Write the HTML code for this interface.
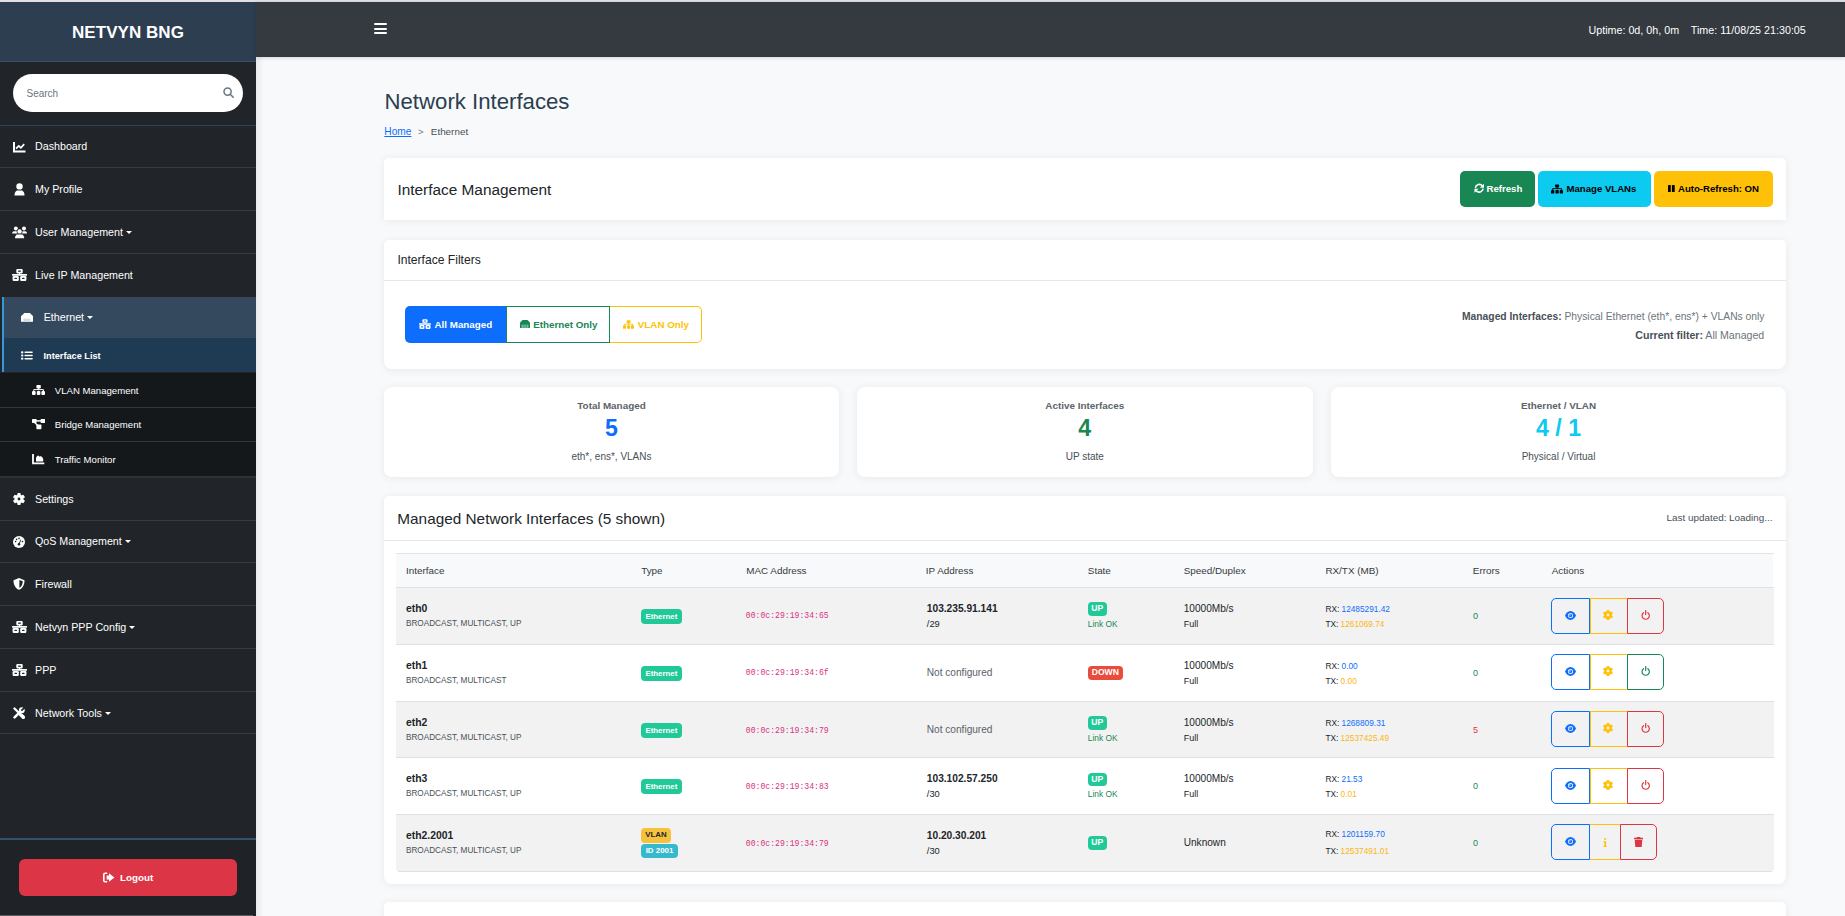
<!DOCTYPE html>
<html><head><meta charset="utf-8">
<style>
*{box-sizing:border-box;margin:0;padding:0}
html,body{width:1845px;height:916px;overflow:hidden}
body{position:relative;background:#f8f9fb;font-family:"Liberation Sans",sans-serif;color:#212529}
.a{position:absolute}
.strip{left:0;top:0;width:1845px;height:2px;background:#dfdfe4}
/* sidebar */
#sb{left:0;top:2px;width:256px;height:914px;background:#212529}
#sbh{left:0;top:2px;width:256px;height:60px;background:#2c3e50;border-bottom:1px solid #34506a}
#sbh span{position:absolute;left:0;width:256px;top:21px;text-align:center;color:#fff;font-weight:700;font-size:17px;letter-spacing:0.05px;line-height:20px}
#search{left:13px;top:74px;width:230px;height:38px;border-radius:19px;background:#fff}
#search span{position:absolute;left:13.5px;top:14.2px;font-size:10px;color:#6c757d;line-height:12px}
.hl{height:1px;left:0;width:256px}
.mi{left:0;width:256px;color:#fff;font-size:10.7px;line-height:14px}
.mi .ic{position:absolute;left:13px}
.mi .tx{position:absolute;left:35px;white-space:nowrap}
.caret{display:inline-block;width:0;height:0;border-left:3px solid transparent;border-right:3px solid transparent;border-top:3.5px solid #fff;vertical-align:2px;margin-left:3px}
/* navbar */
#nav{left:256px;top:2px;width:1589px;height:55px;background:#343a40;box-shadow:0 1px 4px rgba(0,0,0,.15)}
.ham{left:374px;width:13px;height:2.2px;background:#fff;border-radius:1px}
#navtx{left:1588.5px;top:23px;color:#fff;font-size:10.72px;line-height:14px;white-space:nowrap}

.card{background:#fff;box-shadow:0 1px 9px rgba(0,0,0,.07)}
.btn{border-radius:5px;font-size:9.6px;font-weight:700;line-height:14px;white-space:nowrap}
.fbt{top:10.8px;font-size:9.8px;font-weight:700;line-height:14px;white-space:nowrap}
.stl{top:398.5px;text-align:center;font-size:9.9px;font-weight:700;line-height:14px;color:#5c636a}
.stn{top:414.7px;text-align:center;font-size:23.2px;font-weight:700;line-height:26px}
.sts{top:450.4px;text-align:center;font-size:10px;line-height:14px;color:#495057}
/*TCSS*/
.th{top:564px;font-size:9.9px;line-height:14px;color:#343a40;white-space:nowrap}
.tn{font-size:10.4px;font-weight:700;line-height:14px;color:#212529;white-space:nowrap}
.tf{font-size:8.2px;line-height:14px;color:#495057;white-space:nowrap}
.tm{font-family:"Liberation Mono",monospace;font-size:8.15px;line-height:14px;color:#d63384;white-space:nowrap}
.tip{font-size:10.2px;font-weight:700;line-height:14px;color:#212529;white-space:nowrap}
.tr{font-size:10.1px;line-height:14px;color:#212529;white-space:nowrap}
.tl{font-size:8.4px;line-height:14px;color:#198754;white-space:nowrap}
.trx{font-size:8.3px;line-height:14px;color:#212529;white-space:nowrap}
.te{font-size:9px;line-height:14px;white-space:nowrap}
.bdg{height:15.2px;border-radius:4px;font-size:7.9px;font-weight:700;line-height:15.2px;text-align:center;white-space:nowrap}
/*/TCSS*/</style></head><body>
<div class="a strip"></div>
<div class="a" id="sb"></div>
<div class="a" id="sbh"><span>NETVYN BNG</span></div>
<div class="a" id="search"><span>Search</span>
<svg class="a" style="left:210px;top:13px" width="11" height="11" viewBox="0 0 11 11"><circle cx="4.6" cy="4.6" r="3.6" fill="none" stroke="#6c757d" stroke-width="1.5"/><line x1="7.2" y1="7.2" x2="10.2" y2="10.2" stroke="#6c757d" stroke-width="1.6" stroke-linecap="round"/></svg>
</div>
<div class="a hl" style="top:125px;background:#2f4256"></div>

<div class="a" id="nav"></div>
<div class="a ham" style="top:23.2px"></div>
<div class="a ham" style="top:27.8px"></div>
<div class="a ham" style="top:32.2px"></div>
<div class="a" id="navtx">Uptime: 0d, 0h, 0m&nbsp;&nbsp;&nbsp; Time: 11/08/25 21:30:05</div>


<div class="a mi" style="top:139px"><svg class="ic" style="top:2.5px" width="13" height="11" viewBox="0 0 13 11"><path d="M1 0v9.5h11.5" stroke="#fff" stroke-width="2" fill="none"/><path d="M3 6.6l2.8-2.8 2 2 3.4-3.6" stroke="#fff" stroke-width="1.7" fill="none" stroke-linejoin="round"/></svg><span class="tx">Dashboard</span></div>
<div class="a hl" style="top:167px;background:#363a3e"></div>
<div class="a mi" style="top:182px"><svg class="ic" style="top:1px;left:13.5px" width="11" height="13" viewBox="0 0 11 13"><circle cx="5.5" cy="3.4" r="3.2" fill="#fff"/><path d="M0.5 12.6C0.5 9 2.2 7.6 3.6 7.6h3.8c1.4 0 3.1 1.4 3.1 5z" fill="#fff"/></svg><span class="tx">My Profile</span></div>
<div class="a hl" style="top:210px;background:#363a3e"></div>
<div class="a mi" style="top:225px"><svg class="ic" style="top:0.5px;left:12px" width="15" height="13" viewBox="0 0 15 13"><circle cx="3.9" cy="2.4" r="2" fill="#fff"/><circle cx="12" cy="2.4" r="2" fill="#fff"/><path d="M0.2 7.6C0.2 6 1 5.2 2 5.2h3.2c1 0 1.6.8 1.6 2.4z" fill="#fff"/><path d="M15 7.6c0-1.6-.8-2.4-1.8-2.4H10c-1 0-1.6.8-1.6 2.4z" fill="#fff"/><circle cx="7.6" cy="5.4" r="2.9" fill="#212529"/><circle cx="7.6" cy="5.4" r="2.2" fill="#fff"/><path d="M2.4 12.6c0-2.2 1-4.6 2.8-4.6h4.8c1.8 0 2.8 2.4 2.8 4.6z" fill="#212529"/><path d="M3 12.2c0-2 1-3.8 2.4-3.8h4.4c1.4 0 2.4 1.8 2.4 3.8z" fill="#fff"/></svg><span class="tx">User Management<i class="caret"></i></span></div>
<div class="a hl" style="top:253px;background:#363a3e"></div>
<div class="a mi" style="top:268px"><svg class="ic" style="top:1px;left:12.4px" width="15" height="13" viewBox="0 0 15 13"><rect x="4.3" y="0" width="6.4" height="4.4" rx="1.1" fill="#fff"/><rect x="6" y="1.6" width="3" height="1.2" rx=".6" fill="#212529"/><rect x="7" y="4" width="1" height="1.2" fill="#fff"/><rect x="0" y="5" width="15" height="1.8" rx=".5" fill="#fff"/><rect x="0.6" y="7" width="6.2" height="5" rx="1.2" fill="#fff"/><rect x="8.2" y="7" width="6.2" height="5" rx="1.2" fill="#fff"/><rect x="2.4" y="8.8" width="2.6" height="1.3" rx=".6" fill="#212529"/><rect x="10" y="8.8" width="2.6" height="1.3" rx=".6" fill="#212529"/></svg><span class="tx">Live IP Management</span></div>
<!-- ethernet active -->
<div class="a" style="left:2px;top:296.7px;width:254px;height:41.2px;background:#34495e"></div>
<div class="a" style="left:2px;top:337.9px;width:254px;height:34.6px;background:#1f3b53"></div>
<div class="a" style="left:2px;top:296.7px;width:2px;height:75.8px;background:#3498db"></div>
<div class="a mi" style="top:310px"><svg class="ic" style="top:3.3px;left:20.9px" width="12.2" height="9" viewBox="0 0 12.2 9"><path d="M3.2 0h5.8l.8.9 2.4 2.4V8.8H0V3.3L2.4.9z" fill="#fff"/><rect x="2.4" y="5.6" width="7.4" height="3.2" fill="#dfe3e8"/><path d="M3.6 5.6v3.2M5 5.6v3.2M6.4 5.6v3.2M7.8 5.6v3.2" stroke="#c5ccd4" stroke-width=".5"/></svg><span class="tx" style="left:43.7px">Ethernet<i class="caret"></i></span></div>
<div class="a mi" style="top:348.5px;font-size:9.2px;font-weight:700"><svg class="ic" style="top:2.5px;left:21px" width="12" height="9" viewBox="0 0 12 9"><rect x="0" y="0.2" width="2.4" height="2.2" rx="1" fill="#fff"/><rect x="0" y="3.4" width="2.4" height="2.2" rx="1" fill="#fff"/><rect x="0" y="6.6" width="2.4" height="2.2" rx="1" fill="#fff"/><rect x="3.4" y="0.6" width="8.4" height="1.4" rx=".7" fill="#fff"/><rect x="3.4" y="3.8" width="8.4" height="1.4" rx=".7" fill="#fff"/><rect x="3.4" y="7" width="8.4" height="1.4" rx=".7" fill="#fff"/></svg><span class="tx" style="left:43.5px">Interface List</span></div>
<!-- submenu -->
<div class="a" style="left:0;top:372.5px;width:256px;height:104px;background:#15181b"></div>
<div class="a mi" style="top:383.5px;font-size:9.6px"><svg class="ic" style="top:1px;left:31.7px" width="13" height="10" viewBox="0 0 13 10"><rect x="4.4" y="0" width="4.4" height="3.4" rx=".8" fill="#fff"/><rect x="6.2" y="3" width="0.9" height="2.2" fill="#fff"/><path d="M1.8 6.2V4.6h9.6v1.6" stroke="#fff" stroke-width="1" fill="none"/><rect x="0" y="6" width="3.6" height="4" rx="1" fill="#fff"/><rect x="4.8" y="6" width="3.6" height="4" rx="1" fill="#fff"/><rect x="9.4" y="6" width="3.6" height="4" rx="1" fill="#fff"/></svg><span class="tx" style="left:54.8px">VLAN Management</span></div>
<div class="a hl" style="top:407px;background:#33373b"></div>
<div class="a mi" style="top:417.5px;font-size:9.6px"><svg class="ic" style="top:1.5px;left:31.6px" width="13" height="11" viewBox="0 0 13 11"><rect x="0" y="0" width="4.6" height="4" rx=".7" fill="#fff"/><rect x="8.6" y="0" width="4.6" height="4" rx=".7" fill="#fff"/><rect x="4.4" y="5.6" width="5" height="4.6" rx=".7" fill="#fff"/><rect x="4" y="1.2" width="5" height="1.4" fill="#fff"/><path d="M2.6 3.5L5.8 6.6" stroke="#fff" stroke-width="1.4"/></svg><span class="tx" style="left:54.8px">Bridge Management</span></div>
<div class="a hl" style="top:441px;background:#33373b"></div>
<div class="a mi" style="top:452.5px;font-size:9.6px"><svg class="ic" style="top:1.3px;left:32px" width="13" height="11" viewBox="0 0 13 11"><path d="M1 0v9.3h11.3" stroke="#fff" stroke-width="1.8" fill="none"/><path d="M4 7.6V4c.5-1.5 1.4-2.4 2.2-2.4.6 0 .9.8 1.2 1.2.4-.5.8-.6 1.4-.6 1 0 1.8 1.4 2.4 2.6v2.8z" fill="#fff"/></svg><span class="tx" style="left:54.8px">Traffic Monitor</span></div>
<div class="a" style="left:0;top:476px;width:256px;height:2px;background:#2d3135"></div>
<div class="a mi" style="top:492px"><svg class="ic" style="top:0.5px;left:12.9px" width="12" height="12" viewBox="-6 -6 12 12"><g fill="#fff"><circle r="4.4"/><rect x="-1.7" y="-6" width="3.4" height="12" rx="1"/><rect x="-1.7" y="-6" width="3.4" height="12" rx="1" transform="rotate(60)"/><rect x="-1.7" y="-6" width="3.4" height="12" rx="1" transform="rotate(120)"/></g><circle r="1.4" fill="#212529"/></svg><span class="tx">Settings</span></div>
<div class="a hl" style="top:520px;background:#363a3e"></div>
<div class="a mi" style="top:534px"><svg class="ic" style="top:1.9px;left:12.9px" width="12" height="12" viewBox="-6 -6 12 12"><circle r="6" fill="#fff"/><g fill="#212529"><circle cx="-3.4" cy="-0.4" r=".8"/><circle cx="-2.4" cy="-2.6" r=".8"/><circle cx="0" cy="-3.6" r=".8"/><circle cx="3.5" cy="-0.4" r=".8"/><circle cx="0" cy="2.2" r="1.3"/><path d="M-.5 2L1.6-2.6l.7.3L.5 2.2z"/></g></svg><span class="tx">QoS Management<i class="caret"></i></span></div>
<div class="a hl" style="top:562px;background:#363a3e"></div>
<div class="a mi" style="top:577px"><svg class="ic" style="top:1.1px;left:13.2px" width="12" height="12" viewBox="0 0 12 12"><path d="M6 0L11.5 2.2C11.5 7 9.5 10.3 6 11.8 2.5 10.3 .5 7 .5 2.2z" fill="#fff"/><path d="M6.4 1.9L9.8 3.3C9.6 6.6 8.4 8.8 6.4 10z" fill="#212529"/></svg><span class="tx">Firewall</span></div>
<div class="a hl" style="top:605px;background:#363a3e"></div>
<div class="a mi" style="top:620px"><svg class="ic" style="top:1px;left:12.4px" width="15" height="13" viewBox="0 0 15 13"><rect x="4.3" y="0" width="6.4" height="4.4" rx="1.1" fill="#fff"/><rect x="6" y="1.6" width="3" height="1.2" rx=".6" fill="#212529"/><rect x="7" y="4" width="1" height="1.2" fill="#fff"/><rect x="0" y="5" width="15" height="1.8" rx=".5" fill="#fff"/><rect x="0.6" y="7" width="6.2" height="5" rx="1.2" fill="#fff"/><rect x="8.2" y="7" width="6.2" height="5" rx="1.2" fill="#fff"/><rect x="2.4" y="8.8" width="2.6" height="1.3" rx=".6" fill="#212529"/><rect x="10" y="8.8" width="2.6" height="1.3" rx=".6" fill="#212529"/></svg><span class="tx">Netvyn PPP Config<i class="caret"></i></span></div>
<div class="a hl" style="top:648px;background:#363a3e"></div>
<div class="a mi" style="top:663px"><svg class="ic" style="top:1px;left:12.4px" width="15" height="13" viewBox="0 0 15 13"><rect x="4.3" y="0" width="6.4" height="4.4" rx="1.1" fill="#fff"/><rect x="6" y="1.6" width="3" height="1.2" rx=".6" fill="#212529"/><rect x="7" y="4" width="1" height="1.2" fill="#fff"/><rect x="0" y="5" width="15" height="1.8" rx=".5" fill="#fff"/><rect x="0.6" y="7" width="6.2" height="5" rx="1.2" fill="#fff"/><rect x="8.2" y="7" width="6.2" height="5" rx="1.2" fill="#fff"/><rect x="2.4" y="8.8" width="2.6" height="1.3" rx=".6" fill="#212529"/><rect x="10" y="8.8" width="2.6" height="1.3" rx=".6" fill="#212529"/></svg><span class="tx">PPP</span></div>
<div class="a hl" style="top:691px;background:#363a3e"></div>
<div class="a mi" style="top:705.5px"><svg class="ic" style="top:1.5px;left:13px" width="12" height="12" viewBox="0 0 12 12"><path d="M1.5 1.5L6.8 6.8" stroke="#fff" stroke-width="2.3" stroke-linecap="round"/><path d="M7.8 7.8L10.3 10.3" stroke="#fff" stroke-width="3.6" stroke-linecap="round"/><path d="M1.6 10.4L6.8 5.2" stroke="#fff" stroke-width="2.6" stroke-linecap="round"/><circle cx="8.8" cy="3.2" r="2.9" fill="#fff"/><path d="M8.9 3.1L12.4 -.4" stroke="#212529" stroke-width="1.7" stroke-linecap="round"/></svg><span class="tx">Network Tools<i class="caret"></i></span></div>
<div class="a hl" style="top:733px;background:#363a3e"></div>
<div class="a" style="left:0;top:838px;width:256px;height:1.5px;background:#34506b"></div>
<div class="a" style="left:0;top:839.5px;width:256px;height:76.5px;background:#1f2226"></div>
<div class="a" id="logout" style="left:19px;top:859px;width:218px;height:37px;border-radius:6px;background:#dc3545;color:#fff;font-weight:700;font-size:9.8px;line-height:14px"><svg class="a" style="left:83.5px;top:12.5px" width="12" height="11" viewBox="0 0 12 11"><path d="M4.2 1.2H2c-.8 0-1.2.4-1.2 1.2v6.2c0 .8.4 1.2 1.2 1.2h2.2" stroke="#fff" stroke-width="1.6" fill="none"/><path d="M6 3.4V1.2l5.4 4.3L6 9.8V7.6H3.6V3.4z" fill="#fff"/></svg><span class="a" style="left:101px;top:11.5px">Logout</span></div>
<div class="a" style="left:0;top:915px;width:253px;height:1px;background:#5a5e63"></div>

<div class="a" style="left:256px;top:57px;width:8px;height:859px;background:linear-gradient(to right,rgba(0,0,0,.06),rgba(0,0,0,0))"></div>
<div class="a" style="left:384.5px;top:88.9px;font-size:22.2px;line-height:26px;color:#2c3e50;white-space:nowrap">Network Interfaces</div>
<div class="a" style="left:384.3px;top:124.6px;font-size:10.2px;line-height:14px;white-space:nowrap"><span style="color:#0d6efd;text-decoration:underline">Home</span></div>
<div class="a" style="left:418px;top:124.6px;font-size:9.5px;line-height:14px;color:#6c757d">&gt;</div>
<div class="a" style="left:430.8px;top:124.6px;font-size:9.9px;line-height:14px;color:#495057">Ethernet</div>

<!-- card 1 -->
<div class="a card" style="left:384px;top:158.2px;width:1402px;height:62px;border-radius:5px 5px 0 0"></div>
<div class="a" style="left:397.4px;top:179.6px;font-size:15.4px;line-height:20px;color:#212529;white-space:nowrap">Interface Management</div>
<div class="a btn" style="left:1460px;top:171px;width:75px;height:35.6px;background:#198754;color:#fff"><svg class="a" style="left:13.5px;top:12px" width="10.5" height="10.5" viewBox="0 0 10 10"><path d="M1.3 4.6A3.8 3.8 0 0 1 7.9 2.6" stroke="#fff" stroke-width="1.5" fill="none"/><path d="M9.6 0.6V4.6H5.6z" fill="#fff"/><path d="M8.7 5.4A3.8 3.8 0 0 1 2.1 7.4" stroke="#fff" stroke-width="1.5" fill="none"/><path d="M.4 9.4V5.4H4.4z" fill="#fff"/></svg><span class="a" style="left:26.6px;top:10.8px">Refresh</span></div>
<div class="a btn" style="left:1538px;top:171px;width:113px;height:35.6px;background:#0dcaf0;color:#000"><svg class="a" style="left:13.4px;top:12.5px" width="12" height="10" viewBox="0 0 13 10"><rect x="4.4" y="0" width="4.4" height="3.4" rx=".8" fill="#000"/><rect x="6.2" y="3" width="0.9" height="2.2" fill="#000"/><path d="M1.8 6.2V4.6h9.6v1.6" stroke="#000" stroke-width="1" fill="none"/><rect x="0" y="6" width="3.6" height="4" rx="1" fill="#000"/><rect x="4.8" y="6" width="3.6" height="4" rx="1" fill="#000"/><rect x="9.4" y="6" width="3.6" height="4" rx="1" fill="#000"/></svg><span class="a" style="left:28.5px;top:10.8px">Manage VLANs</span></div>
<div class="a btn" style="left:1654.2px;top:171px;width:118.8px;height:35.6px;background:#ffc107;color:#000"><svg class="a" style="left:13.9px;top:13.5px" width="7" height="7.5" viewBox="0 0 7 7.5"><rect x="0" y="0" width="2.8" height="7.4" rx=".4" fill="#000"/><rect x="3.9" y="0" width="2.8" height="7.4" rx=".4" fill="#000"/></svg><span class="a" style="left:23.8px;top:10.8px">Auto-Refresh: ON</span></div>

<!-- card 2 filters -->
<div class="a card" style="left:384px;top:240.2px;width:1402px;height:128.6px;border-radius:5px 5px 8px 8px"></div>
<div class="a" style="left:384px;top:280px;width:1402px;height:1px;background:#e3e6ea"></div>
<div class="a" style="left:397.4px;top:251.9px;font-size:12.1px;line-height:16px;color:#212529;white-space:nowrap">Interface Filters</div>
<div class="a" style="left:405px;top:306px;width:101.5px;height:36.8px;background:#0d6efd;border-radius:5px 0 0 5px;color:#fff" class="fb"><svg class="a" style="left:14.2px;top:12.5px" width="12" height="11" viewBox="0 0 15 13"><rect x="4.3" y="0" width="6.4" height="4.4" rx="1.1" fill="#fff"/><rect x="6" y="1.6" width="3" height="1.2" rx=".6" fill="#0d6efd"/><rect x="7" y="4" width="1" height="1.2" fill="#fff"/><rect x="0" y="5" width="15" height="1.8" rx=".5" fill="#fff"/><rect x="0.6" y="7" width="6.2" height="5" rx="1.2" fill="#fff"/><rect x="8.2" y="7" width="6.2" height="5" rx="1.2" fill="#fff"/><rect x="2.4" y="8.8" width="2.6" height="1.3" rx=".6" fill="#0d6efd"/><rect x="10" y="8.8" width="2.6" height="1.3" rx=".6" fill="#0d6efd"/></svg><span class="a fbt" style="left:29.5px;top:11.8px">All Managed</span></div>
<div class="a" style="left:506.3px;top:306px;width:103.9px;height:36.8px;border:1px solid #198754;color:#198754"><svg class="a" style="left:13.2px;top:12.6px" width="10" height="8" viewBox="0 0 10 8"><path d="M2.5 0h5L10 2.5V8H0V2.5z" fill="#198754"/><path d="M2.2 4.6v3.4M4 4.6v3.4M5.9 4.6v3.4M7.8 4.6v3.4" stroke="#fff" stroke-width=".6"/></svg><span class="a fbt" style="left:25.9px;top:10.8px">Ethernet Only</span></div>
<div class="a" style="left:610.2px;top:306px;width:91.4px;height:36.8px;border:1px solid #ffc107;border-left:none;border-radius:0 5px 5px 0;color:#ffc107"><svg class="a" style="left:12.8px;top:13px" width="11" height="9" viewBox="0 0 13 10"><rect x="4.4" y="0" width="4.4" height="3.4" rx=".8" fill="#ffc107"/><rect x="6.2" y="3" width="0.9" height="2.2" fill="#ffc107"/><path d="M1.8 6.2V4.6h9.6v1.6" stroke="#ffc107" stroke-width="1" fill="none"/><rect x="0" y="6" width="3.6" height="4" rx="1" fill="#ffc107"/><rect x="4.8" y="6" width="3.6" height="4" rx="1" fill="#ffc107"/><rect x="9.4" y="6" width="3.6" height="4" rx="1" fill="#ffc107"/></svg><span class="a fbt" style="left:27.6px;top:10.8px">VLAN Only</span></div>
<div class="a" style="right:80.5px;top:310px;font-size:10.3px;line-height:14px;color:#6c757d;white-space:nowrap;text-align:right"><b style="color:#495057">Managed Interfaces:</b> Physical Ethernet (eth*, ens*) + VLANs only</div>
<div class="a" style="right:80.8px;top:328px;font-size:10.6px;line-height:14px;color:#6c757d;white-space:nowrap;text-align:right"><b style="color:#495057">Current filter:</b> All Managed</div>

<!-- stat cards -->
<div class="a card" style="left:384px;top:386.9px;width:455px;height:89.8px;border-radius:8px"></div>
<div class="a card" style="left:857px;top:386.9px;width:455.6px;height:89.8px;border-radius:8px"></div>
<div class="a card" style="left:1331px;top:386.9px;width:455px;height:89.8px;border-radius:8px"></div>
<div class="a stl" style="left:384px;width:455px">Total Managed</div>
<div class="a stn" style="left:384px;width:455px;color:#0d6efd">5</div>
<div class="a sts" style="left:384px;width:455px">eth*, ens*, VLANs</div>
<div class="a stl" style="left:857px;width:455.6px">Active Interfaces</div>
<div class="a stn" style="left:857px;width:455.6px;color:#198754">4</div>
<div class="a sts" style="left:857px;width:455.6px">UP state</div>
<div class="a stl" style="left:1331px;width:455px">Ethernet / VLAN</div>
<div class="a stn" style="left:1331px;width:455px;color:#0dcaf0">4 / 1</div>
<div class="a sts" style="left:1331px;width:455px">Physical / Virtual</div>

<!--TABLE-->
<div class="a card" style="left:384px;top:496.1px;width:1402px;height:388.1px;border-radius:5px 5px 8px 8px"></div>
<div class="a" style="left:384px;top:540px;width:1402px;height:1px;background:#e3e6ea"></div>
<div class="a" style="left:397.3px;top:509px;font-size:15.35px;line-height:20px;color:#212529;white-space:nowrap">Managed Network Interfaces (5 shown)</div>
<div class="a" style="right:72.5px;top:510.5px;font-size:9.9px;line-height:14px;color:#495057;white-space:nowrap">Last updated: Loading...</div>
<div class="a" style="left:396px;top:553px;width:1378px;height:318.5px;border-radius:0 0 4px 4px;overflow:hidden;border-top:1px solid #e1e4e8">
<div class="a" style="left:0;top:0;width:1376.5px;height:33.3px;background:#f8f9fa"></div>
<div class="a" style="left:0;top:32.80px;width:1378px;height:56.9px;background:#f2f2f2;border-top:1px solid #dde1e5"></div>
<div class="a" style="left:0;top:89.70px;width:1378px;height:56.9px;background:#fff;border-top:1px solid #dde1e5"></div>
<div class="a" style="left:0;top:147.00px;width:1378px;height:56.9px;background:#f2f2f2;border-top:1px solid #dde1e5"></div>
<div class="a" style="left:0;top:202.90px;width:1378px;height:56.9px;background:#fff;border-top:1px solid #dde1e5"></div>
<div class="a" style="left:0;top:260.10px;width:1378px;height:56.9px;background:#f2f2f2;border-top:1px solid #dde1e5"></div>
<div class="a" style="left:0;top:316.80px;width:1378px;height:1px;background:#dde1e5"></div>
</div>
<div class="a th" style="left:406px">Interface</div>
<div class="a th" style="left:641.2px">Type</div>
<div class="a th" style="left:746.2px">MAC Address</div>
<div class="a th" style="left:925.8px">IP Address</div>
<div class="a th" style="left:1087.8px">State</div>
<div class="a th" style="left:1183.7px">Speed/Duplex</div>
<div class="a th" style="left:1325.4px">RX/TX (MB)</div>
<div class="a th" style="left:1472.8px">Errors</div>
<div class="a th" style="left:1551.7px">Actions</div>
<div class="a tn" style="left:406px;top:601.8px;">eth0</div>
<div class="a tf" style="left:406px;top:616.5px;">BROADCAST, MULTICAST, UP</div>
<div class="a bdg" style="left:640.8px;top:608.8px;width:41.2px;background:#20c997;color:#fff">Ethernet</div>
<div class="a tm" style="left:745.8px;top:609.4px;">00:0c:29:19:34:65</div>
<div class="a tip" style="left:926.8px;top:601.6px;">103.235.91.141</div>
<div class="a tr" style="left:926.8px;top:616.7px;font-size:9.3px">/29</div>
<div class="a bdg" style="left:1087.8px;top:602.3px;width:19px;height:13.5px;line-height:13.5px;background:#20c997;color:#fff;font-size:8.6px">UP</div>
<div class="a tl" style="left:1087.8px;top:616.5px;">Link OK</div>
<div class="a tr" style="left:1183.7px;top:601.8px;">10000Mb/s</div>
<div class="a tr" style="left:1183.7px;top:616.5px;font-size:9px">Full</div>
<div class="a trx" style="left:1325.4px;top:601.8px;">RX: <span style="color:#0d6efd">12485291.42</span></div>
<div class="a trx" style="left:1325.4px;top:616.5px;">TX: <span style="color:#fdb515">1261069.74</span></div>
<div class="a te" style="left:1473px;top:608.5px;color:#198754">0</div>
<div class="a" style="left:1551.3px;top:598.2px;width:38.4px;height:35.4px;border:1px solid #0d6efd;border-radius:5px 0 0 5px"><svg class="a" style="left:12.8px;top:12.2px" width="11" height="9" viewBox="0 0 11 9"><path d="M5.5 0C8.3 0 10.2 2.4 11 4.5 10.2 6.6 8.3 9 5.5 9S.8 6.6 0 4.5C.8 2.4 2.7 0 5.5 0z" fill="#0d6efd"/><circle cx="5.5" cy="4.5" r="2.5" fill="#f2f2f2"/><circle cx="5.5" cy="4.5" r="1.7" fill="#0d6efd"/><circle cx="4.9" cy="3.9" r=".7" fill="#f2f2f2"/></svg></div>
<div class="a" style="left:1589.7px;top:598.2px;width:37px;height:35.4px;border-top:1px solid #ffc107;border-bottom:1px solid #ffc107;border-left:1px solid #ffc107"><svg class="a" style="left:12.3px;top:11.3px" width="10" height="10" viewBox="-6 -6 12 12"><g fill="#ffc107"><circle r="4.4"/><rect x="-1.7" y="-6" width="3.4" height="12" rx="1"/><rect x="-1.7" y="-6" width="3.4" height="12" rx="1" transform="rotate(60)"/><rect x="-1.7" y="-6" width="3.4" height="12" rx="1" transform="rotate(120)"/></g><circle r="1.7" fill="#f2f2f2"/></svg></div>
<div class="a" style="left:1626.7px;top:598.2px;width:37.1px;height:35.4px;border:1px solid #dc3545;border-radius:0 5px 5px 0"><svg class="a" style="left:13px;top:11.2px" width="9.4" height="10" viewBox="0 0 10 11"><path d="M2.6 3A4 4 0 1 0 7.4 3" stroke="#dc3545" stroke-width="1.3" fill="none" stroke-linecap="round"/><path d="M5 .6v4.4" stroke="#dc3545" stroke-width="1.3" stroke-linecap="round"/></svg></div>
<div class="a tn" style="left:406px;top:658.8px;">eth1</div>
<div class="a tf" style="left:406px;top:673.5px;">BROADCAST, MULTICAST</div>
<div class="a bdg" style="left:640.8px;top:665.8px;width:41.2px;background:#20c997;color:#fff">Ethernet</div>
<div class="a tm" style="left:745.8px;top:666.4px;">00:0c:29:19:34:6f</div>
<div class="a tr" style="left:926.8px;top:665.6px;color:#5a6268">Not configured</div>
<div class="a bdg" style="left:1087.8px;top:666.0px;width:35px;height:13.5px;line-height:13.5px;background:#e74c3c;color:#fff;font-size:8.6px">DOWN</div>
<div class="a tr" style="left:1183.7px;top:658.8px;">10000Mb/s</div>
<div class="a tr" style="left:1183.7px;top:673.5px;font-size:9px">Full</div>
<div class="a trx" style="left:1325.4px;top:658.8px;">RX: <span style="color:#0d6efd">0.00</span></div>
<div class="a trx" style="left:1325.4px;top:673.5px;">TX: <span style="color:#fdb515">0.00</span></div>
<div class="a te" style="left:1473px;top:665.5px;color:#198754">0</div>
<div class="a" style="left:1551.3px;top:654.2px;width:38.4px;height:35.4px;border:1px solid #0d6efd;border-radius:5px 0 0 5px"><svg class="a" style="left:12.8px;top:12.2px" width="11" height="9" viewBox="0 0 11 9"><path d="M5.5 0C8.3 0 10.2 2.4 11 4.5 10.2 6.6 8.3 9 5.5 9S.8 6.6 0 4.5C.8 2.4 2.7 0 5.5 0z" fill="#0d6efd"/><circle cx="5.5" cy="4.5" r="2.5" fill="#fff"/><circle cx="5.5" cy="4.5" r="1.7" fill="#0d6efd"/><circle cx="4.9" cy="3.9" r=".7" fill="#fff"/></svg></div>
<div class="a" style="left:1589.7px;top:654.2px;width:37px;height:35.4px;border-top:1px solid #ffc107;border-bottom:1px solid #ffc107;border-left:1px solid #ffc107"><svg class="a" style="left:12.3px;top:11.3px" width="10" height="10" viewBox="-6 -6 12 12"><g fill="#ffc107"><circle r="4.4"/><rect x="-1.7" y="-6" width="3.4" height="12" rx="1"/><rect x="-1.7" y="-6" width="3.4" height="12" rx="1" transform="rotate(60)"/><rect x="-1.7" y="-6" width="3.4" height="12" rx="1" transform="rotate(120)"/></g><circle r="1.7" fill="#fff"/></svg></div>
<div class="a" style="left:1626.7px;top:654.2px;width:37.1px;height:35.4px;border:1px solid #198754;border-radius:0 5px 5px 0"><svg class="a" style="left:13px;top:11.2px" width="9.4" height="10" viewBox="0 0 10 11"><path d="M2.6 3A4 4 0 1 0 7.4 3" stroke="#198754" stroke-width="1.3" fill="none" stroke-linecap="round"/><path d="M5 .6v4.4" stroke="#198754" stroke-width="1.3" stroke-linecap="round"/></svg></div>
<div class="a tn" style="left:406px;top:715.9px;">eth2</div>
<div class="a tf" style="left:406px;top:730.6px;">BROADCAST, MULTICAST, UP</div>
<div class="a bdg" style="left:640.8px;top:722.9px;width:41.2px;background:#20c997;color:#fff">Ethernet</div>
<div class="a tm" style="left:745.8px;top:723.5px;">00:0c:29:19:34:79</div>
<div class="a tr" style="left:926.8px;top:722.7px;color:#5a6268">Not configured</div>
<div class="a bdg" style="left:1087.8px;top:716.4px;width:19px;height:13.5px;line-height:13.5px;background:#20c997;color:#fff;font-size:8.6px">UP</div>
<div class="a tl" style="left:1087.8px;top:730.6px;">Link OK</div>
<div class="a tr" style="left:1183.7px;top:715.9px;">10000Mb/s</div>
<div class="a tr" style="left:1183.7px;top:730.6px;font-size:9px">Full</div>
<div class="a trx" style="left:1325.4px;top:715.9px;">RX: <span style="color:#0d6efd">1268809.31</span></div>
<div class="a trx" style="left:1325.4px;top:730.6px;">TX: <span style="color:#fdb515">12537425.49</span></div>
<div class="a te" style="left:1473px;top:722.6px;color:#dc3545">5</div>
<div class="a" style="left:1551.3px;top:711.2px;width:38.4px;height:35.4px;border:1px solid #0d6efd;border-radius:5px 0 0 5px"><svg class="a" style="left:12.8px;top:12.2px" width="11" height="9" viewBox="0 0 11 9"><path d="M5.5 0C8.3 0 10.2 2.4 11 4.5 10.2 6.6 8.3 9 5.5 9S.8 6.6 0 4.5C.8 2.4 2.7 0 5.5 0z" fill="#0d6efd"/><circle cx="5.5" cy="4.5" r="2.5" fill="#f2f2f2"/><circle cx="5.5" cy="4.5" r="1.7" fill="#0d6efd"/><circle cx="4.9" cy="3.9" r=".7" fill="#f2f2f2"/></svg></div>
<div class="a" style="left:1589.7px;top:711.2px;width:37px;height:35.4px;border-top:1px solid #ffc107;border-bottom:1px solid #ffc107;border-left:1px solid #ffc107"><svg class="a" style="left:12.3px;top:11.3px" width="10" height="10" viewBox="-6 -6 12 12"><g fill="#ffc107"><circle r="4.4"/><rect x="-1.7" y="-6" width="3.4" height="12" rx="1"/><rect x="-1.7" y="-6" width="3.4" height="12" rx="1" transform="rotate(60)"/><rect x="-1.7" y="-6" width="3.4" height="12" rx="1" transform="rotate(120)"/></g><circle r="1.7" fill="#f2f2f2"/></svg></div>
<div class="a" style="left:1626.7px;top:711.2px;width:37.1px;height:35.4px;border:1px solid #dc3545;border-radius:0 5px 5px 0"><svg class="a" style="left:13px;top:11.2px" width="9.4" height="10" viewBox="0 0 10 11"><path d="M2.6 3A4 4 0 1 0 7.4 3" stroke="#dc3545" stroke-width="1.3" fill="none" stroke-linecap="round"/><path d="M5 .6v4.4" stroke="#dc3545" stroke-width="1.3" stroke-linecap="round"/></svg></div>
<div class="a tn" style="left:406px;top:772.0px;">eth3</div>
<div class="a tf" style="left:406px;top:786.7px;">BROADCAST, MULTICAST, UP</div>
<div class="a bdg" style="left:640.8px;top:779.0px;width:41.2px;background:#20c997;color:#fff">Ethernet</div>
<div class="a tm" style="left:745.8px;top:779.6px;">00:0c:29:19:34:83</div>
<div class="a tip" style="left:926.8px;top:771.8px;">103.102.57.250</div>
<div class="a tr" style="left:926.8px;top:786.9px;font-size:9.3px">/30</div>
<div class="a bdg" style="left:1087.8px;top:772.5px;width:19px;height:13.5px;line-height:13.5px;background:#20c997;color:#fff;font-size:8.6px">UP</div>
<div class="a tl" style="left:1087.8px;top:786.7px;">Link OK</div>
<div class="a tr" style="left:1183.7px;top:772.0px;">10000Mb/s</div>
<div class="a tr" style="left:1183.7px;top:786.7px;font-size:9px">Full</div>
<div class="a trx" style="left:1325.4px;top:772.0px;">RX: <span style="color:#0d6efd">21.53</span></div>
<div class="a trx" style="left:1325.4px;top:786.7px;">TX: <span style="color:#fdb515">0.01</span></div>
<div class="a te" style="left:1473px;top:778.7px;color:#198754">0</div>
<div class="a" style="left:1551.3px;top:768.2px;width:38.4px;height:35.4px;border:1px solid #0d6efd;border-radius:5px 0 0 5px"><svg class="a" style="left:12.8px;top:12.2px" width="11" height="9" viewBox="0 0 11 9"><path d="M5.5 0C8.3 0 10.2 2.4 11 4.5 10.2 6.6 8.3 9 5.5 9S.8 6.6 0 4.5C.8 2.4 2.7 0 5.5 0z" fill="#0d6efd"/><circle cx="5.5" cy="4.5" r="2.5" fill="#fff"/><circle cx="5.5" cy="4.5" r="1.7" fill="#0d6efd"/><circle cx="4.9" cy="3.9" r=".7" fill="#fff"/></svg></div>
<div class="a" style="left:1589.7px;top:768.2px;width:37px;height:35.4px;border-top:1px solid #ffc107;border-bottom:1px solid #ffc107;border-left:1px solid #ffc107"><svg class="a" style="left:12.3px;top:11.3px" width="10" height="10" viewBox="-6 -6 12 12"><g fill="#ffc107"><circle r="4.4"/><rect x="-1.7" y="-6" width="3.4" height="12" rx="1"/><rect x="-1.7" y="-6" width="3.4" height="12" rx="1" transform="rotate(60)"/><rect x="-1.7" y="-6" width="3.4" height="12" rx="1" transform="rotate(120)"/></g><circle r="1.7" fill="#fff"/></svg></div>
<div class="a" style="left:1626.7px;top:768.2px;width:37.1px;height:35.4px;border:1px solid #dc3545;border-radius:0 5px 5px 0"><svg class="a" style="left:13px;top:11.2px" width="9.4" height="10" viewBox="0 0 10 11"><path d="M2.6 3A4 4 0 1 0 7.4 3" stroke="#dc3545" stroke-width="1.3" fill="none" stroke-linecap="round"/><path d="M5 .6v4.4" stroke="#dc3545" stroke-width="1.3" stroke-linecap="round"/></svg></div>
<div class="a tn" style="left:406px;top:829.0px;">eth2.2001</div>
<div class="a tf" style="left:406px;top:843.7px;">BROADCAST, MULTICAST, UP</div>
<div class="a bdg" style="left:641px;top:828.1px;width:30px;height:14.7px;line-height:14.7px;background:#f6c23e;color:#212529">VLAN</div>
<div class="a bdg" style="left:641px;top:844.0px;width:37px;height:14px;line-height:14px;background:#36b9cc;color:#fff">ID 2001</div>
<div class="a tm" style="left:745.8px;top:836.6px;">00:0c:29:19:34:79</div>
<div class="a tip" style="left:926.8px;top:828.8px;">10.20.30.201</div>
<div class="a tr" style="left:926.8px;top:843.9px;font-size:9.3px">/30</div>
<div class="a bdg" style="left:1087.8px;top:836.2px;width:19px;height:13.5px;line-height:13.5px;background:#20c997;color:#fff;font-size:8.6px">UP</div>
<div class="a tr" style="left:1183.7px;top:835.7px;">Unknown</div>
<div class="a trx" style="left:1325.4px;top:827.4px;">RX: <span style="color:#0d6efd">1201159.70</span></div>
<div class="a trx" style="left:1325.4px;top:843.6px;">TX: <span style="color:#fdb515">12537491.01</span></div>
<div class="a te" style="left:1473px;top:835.7px;color:#198754">0</div>
<div class="a" style="left:1551.3px;top:824.2px;width:38.5px;height:35.4px;border:1px solid #0d6efd;border-radius:5px 0 0 5px"><svg class="a" style="left:12.8px;top:12.2px" width="11" height="9" viewBox="0 0 11 9"><path d="M5.5 0C8.3 0 10.2 2.4 11 4.5 10.2 6.6 8.3 9 5.5 9S.8 6.6 0 4.5C.8 2.4 2.7 0 5.5 0z" fill="#0d6efd"/><circle cx="5.5" cy="4.5" r="2.5" fill="#f2f2f2"/><circle cx="5.5" cy="4.5" r="1.7" fill="#0d6efd"/><circle cx="4.9" cy="3.9" r=".7" fill="#f2f2f2"/></svg></div>
<div class="a" style="left:1589.8px;top:824.2px;width:30.6px;height:35.4px;border-top:1px solid #ffc107;border-bottom:1px solid #ffc107"><svg class="a" style="left:12.9px;top:12.6px" width="4.4" height="9.6" viewBox="0 0 4.4 9.6"><rect x="1.3" y="0" width="1.8" height="1.8" rx=".3" fill="#ffc107"/><path d="M.5 3.3h2.6v5h1.1v1.3H.2V8.3h1.2V4.6H.5z" fill="#ffc107"/></svg></div>
<div class="a" style="left:1620.3px;top:824.2px;width:36.3px;height:35.4px;border:1px solid #dc3545;border-radius:0 5px 5px 0"><svg class="a" style="left:12.6px;top:11.6px" width="9" height="10" viewBox="0 0 9 10"><path d="M3 0h3l.4.8H9v1.4H0V.8h2.6z" fill="#dc3545"/><path d="M.7 2.8h7.6L7.7 10H1.3z" fill="#dc3545"/></svg></div>
<div class="a card" style="left:384px;top:902px;width:1402px;height:60px;border-radius:5px 5px 0 0"></div>
<!--/TABLE-->
</body></html>
